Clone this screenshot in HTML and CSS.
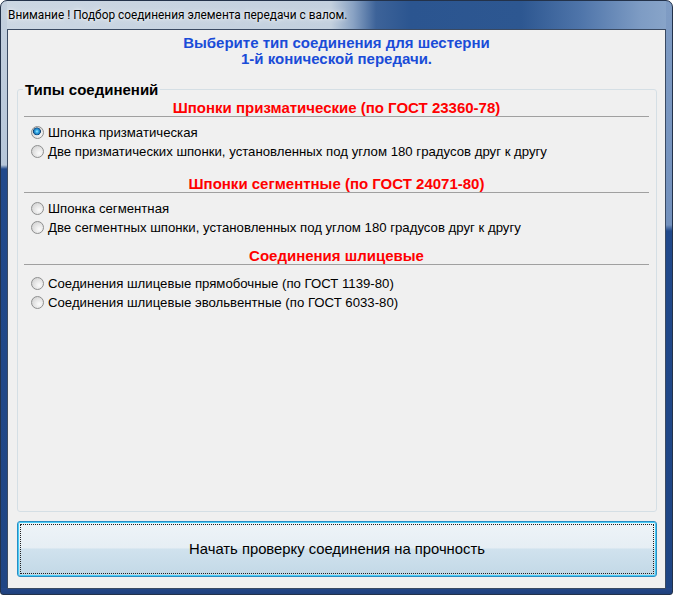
FILE: index.html
```html
<!DOCTYPE html>
<html lang="ru">
<head>
    <meta charset="UTF-8">
    <meta name="viewport" content="width=device-width, initial-scale=1.0">
    <title>Подбор соединения</title>
    <link rel="stylesheet" href="styles.css">
</head>
<body>
    <div class="window">
        <div class="titlebar">
            <span class="title">Внимание ! Подбор соединения элемента передачи с валом.</span>
        </div>
        <div class="client">
            <div class="prompt">Выберите тип соединения для шестерни<br>1-й конической передачи.</div>

            <fieldset class="group">
                <legend>Типы соединений</legend>

                <section class="section">
                    <h3>Шпонки призматические (по ГОСТ 23360-78)</h3>
                    <ul class="options">
                        <li><label><input type="radio" name="joint" checked>Шпонка призматическая</label></li>
                        <li><label><input type="radio" name="joint">Две призматических шпонки, установленных под углом 180 градусов друг к другу</label></li>
                    </ul>
                </section>

                <section class="section">
                    <h3>Шпонки сегментные (по ГОСТ 24071-80)</h3>
                    <ul class="options">
                        <li><label><input type="radio" name="joint">Шпонка сегментная</label></li>
                        <li><label><input type="radio" name="joint">Две сегментных шпонки, установленных под углом 180 градусов друг к другу</label></li>
                    </ul>
                </section>

                <section class="section">
                    <h3>Соединения шлицевые</h3>
                    <ul class="options">
                        <li><label><input type="radio" name="joint">Соединения шлицевые прямобочные (по ГОСТ 1139-80)</label></li>
                        <li><label><input type="radio" name="joint">Соединения шлицевые эвольвентные (по ГОСТ 6033-80)</label></li>
                    </ul>
                </section>
            </fieldset>

            <button class="button">Начать проверку соединения на прочность</button>
        </div>
    </div>
</body>
</html>
```

FILE: styles.css
```css
body {
    margin: 0;
    font-family: 'Liberation Sans', Arial, sans-serif;
    background-color: #ffffff;
}

.window {
    width: 673px;
    height: 595px;
    box-sizing: border-box;
    border: 1px solid #23324a;
    border-radius: 7px 7px 3px 3px;
    display: flex;
    flex-direction: column;
    overflow: hidden;
    background:
        linear-gradient(#24488a, #1f407c) left bottom / 100% 6px no-repeat,
        linear-gradient(to bottom, #c4d0de 0, #b6c6d9 164px, #21498b 168px, #1f4584 100%) left top / 6px 100% no-repeat,
        linear-gradient(to bottom, #7f9cc4 0, #7391bd 224px, #21498b 230px, #1f4584 100%) right top / 6px 100% no-repeat,
        linear-gradient(to right, #ccd7e3 0, #c3d0de 330px, #8aa3c4 352px, #3d6399 375px, #2b5590 410px, #2d5791 520px, #4f75aa 580px, #7e9cc4 640px, #8aa6ca 100%);
}

.titlebar {
    height: 28px;
    flex: none;
    display: flex;
    align-items: center;
    padding-left: 7px;
}

.title {
    font-family: Roboto, 'Noto Sans', sans-serif;
    font-size: 11.85px;
    line-height: 28px;
    color: #000;
    text-shadow: 0 0 6px rgba(255, 255, 255, 0.9), 0 0 3px rgba(255, 255, 255, 0.7);
}

.client {
    flex: 1;
    margin: 0 6px 5px 6px;
    border: 1px solid #3a4a62;
    background-color: #f0f0f0;
    display: flex;
    flex-direction: column;
    min-height: 0;
}

.prompt {
    padding-top: 5px;
    margin-bottom: 14px;
    text-align: center;
    font-weight: bold;
    font-size: 15px;
    line-height: 16px;
    color: #1a4cd8;
}

.group {
    flex: 1;
    margin: 0 8px 0 9px;
    padding: 2px 0 0 0;
    border: 1px solid #d5dfe5;
    border-radius: 3px;
    min-width: 0;
}

.group legend {
    margin-left: 5px;
    padding: 0 2px;
    font-weight: bold;
    font-size: 15px;
    line-height: 17px;
    color: #000;
}

.section h3 {
    margin: 0 7px 0 6px;
    font-size: 15px;
    line-height: 16px;
    font-weight: bold;
    color: #ff0000;
    text-align: center;
    border-bottom: 1px solid #a0a0a0;
}

.section:nth-of-type(2) {
    margin-top: 15px;
}

.section:nth-of-type(3) {
    margin-top: 11px;
}

.options {
    list-style: none;
    margin: 6px 0 0 0;
    padding: 0 0 0 13px;
}

.section:nth-of-type(3) .options {
    margin-top: 9px;
}

.options label {
    display: flex;
    align-items: center;
    gap: 4px;
    font-size: 13.2px;
    line-height: 19px;
    color: #000;
}

.options input {
    appearance: none;
    -webkit-appearance: none;
    margin: 0;
    width: 13px;
    height: 13px;
    flex: none;
    border: 1px solid #8e8f8f;
    border-radius: 50%;
    box-sizing: border-box;
    background: radial-gradient(circle at 65% 65%, #fbfbfb 0, #e6e6e6 45%, #cbcbcb 100%);
}

.options input:checked {
    background:
        radial-gradient(circle at 45% 40%, #a8ecff 0, #36aee8 1.5px, #1a73b6 3px, #0f3f6c 3.6px, rgba(15, 63, 108, 0) 4.2px),
        radial-gradient(circle at 65% 65%, #fbfbfb 0, #e6e6e6 45%, #cbcbcb 100%);
}

.button {
    flex: none;
    height: 56px;
    margin: 9px 8px 11px 9px;
    font-family: 'Liberation Sans', Arial, sans-serif;
    font-size: 14.8px;
    color: #000;
    border: 1px solid #2a8cc4;
    border-radius: 3px;
    box-shadow: inset 0 0 0 1px #48cdf5;
    background: linear-gradient(to bottom, #eef4f8 0, #e6eef4 48%, #d0e2ee 50%, #c2d8e6 100%);
    outline: 1px dotted #202020;
    outline-offset: -4px;
    cursor: pointer;
}
```
